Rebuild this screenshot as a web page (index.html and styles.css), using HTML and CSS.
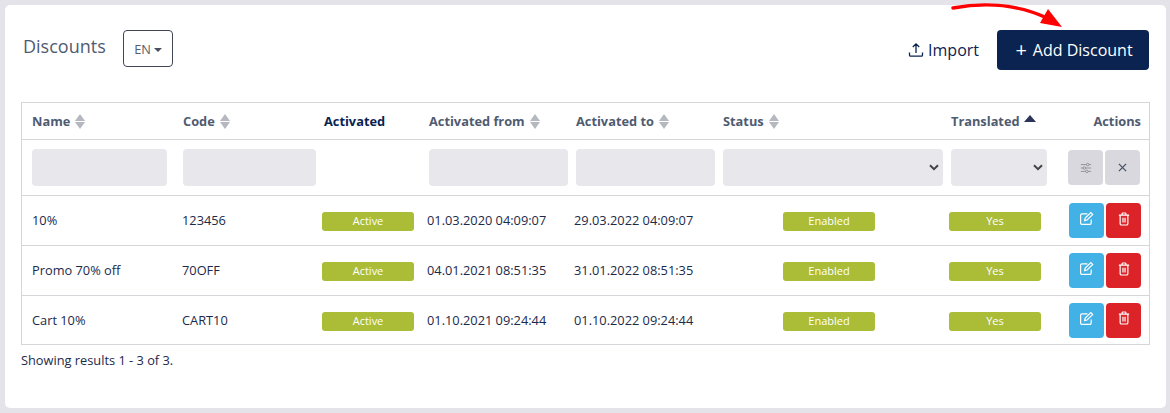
FILE: index.html
```html
<!DOCTYPE html>
<html lang="en">
<head>
<meta charset="utf-8">
<title>Discounts</title>
<link rel="stylesheet" href="styles.css">
</head>
<body>
<main class="card">
  <svg class="arrow" width="120" height="32" viewBox="0 0 120 32" aria-hidden="true">
    <path d="M3 8C30 3 65 3 97 18" fill="none" stroke="#f00" stroke-width="3.500" stroke-linecap="round"/>
    <path d="M98 9L112 27L90 23Z" fill="#f00"/>
  </svg>
  <header class="top">
    <div class="top-left">
      <h1 class="title">Discounts</h1>
      <button class="lang">EN<span class="caret"></span></button>
    </div>
    <div class="top-right">
      <a class="import">
        <svg width="16" height="16" viewBox="0 0 16 16" fill="none" stroke="#0a2351" stroke-width="1.300"><path d="M8 11V2M4.800 5L8 1.800 11.200 5M1.500 10.500V13a1.200 1.200 0 0 0 1.200 1.200h10.600a1.200 1.200 0 0 0 1.200-1.200V10.500"/></svg>
        Import
      </a>
      <button class="add"><span class="plus">+</span>Add Discount</button>
    </div>
  </header>

  <section class="table">
    <div class="row head">
      <div class="th muted">Name<span class="sort"></span></div>
      <div class="th muted">Code<span class="sort"></span></div>
      <div class="th dark">Activated</div>
      <div class="th muted">Activated from<span class="sort"></span></div>
      <div class="th muted">Activated to<span class="sort"></span></div>
      <div class="th muted">Status<span class="sort"></span></div>
      <div class="th muted">Translated<span class="sort-up"></span></div>
      <div class="th muted right">Actions</div>
    </div>
    <div class="row head filters">
      <input class="field" aria-label="Name">
      <input class="field" aria-label="Code">
      <div></div>
      <input class="field" aria-label="Activated from">
      <input class="field" aria-label="Activated to">
      <div class="select"><svg class="chev" width="10" height="7" viewBox="0 0 10 7"><path d="M1 1.200L5 5.200 9 1.200" fill="none" stroke="#444" stroke-width="2"/></svg></div>
      <div class="select narrow"><svg class="chev" width="10" height="7" viewBox="0 0 10 7"><path d="M1 1.200L5 5.200 9 1.200" fill="none" stroke="#444" stroke-width="2"/></svg></div>
      <div class="filter-btns">
        <button class="btn grey"><svg width="12" height="12" viewBox="0 0 14 14" fill="none" stroke="#8b8b93"><path d="M1 3h12M1 7h12M1 11h12"/><circle cx="9" cy="3" r="1.500" fill="#d8d8de"/><circle cx="5" cy="7" r="1.500" fill="#d8d8de"/><circle cx="8" cy="11" r="1.500" fill="#d8d8de"/></svg></button>
        <button class="btn grey"><svg width="9" height="9" viewBox="0 0 10 10" fill="none" stroke="#4a4f60" stroke-width="1.400"><path d="M1 1l8 8M9 1l-8 8"/></svg></button>
      </div>
    </div>

    <div class="row body">
      <div>10%</div><div>123456</div><span class="badge">Active</span>
      <div>01.03.2020 04:09:07</div><div>29.03.2022 04:09:07</div>
      <span class="badge status">Enabled</span><span class="badge">Yes</span>
      <div class="actions">
        <button class="btn blue"><svg class="ico" width="15" height="15" viewBox="0 0 16 16" fill="none" stroke="#fff" stroke-width="1.300"><path d="M13 9v3.800a1.500 1.500 0 0 1-1.500 1.500H3.200a1.500 1.500 0 0 1-1.500-1.500V4.500A1.500 1.500 0 0 1 3.200 3H9"/><path d="M6 10.300l.6-2.700 6-6 2 2-6 6z"/></svg></button>
        <button class="btn red"><svg class="ico" width="12" height="14" viewBox="0 0 14 16" fill="none" stroke="#fff" stroke-width="1.400"><path d="M1 3.500h12M4.800 3.500V2a1 1 0 0 1 1-1h2.400a1 1 0 0 1 1 1v1.500M2.500 3.500v10a1.500 1.500 0 0 0 1.500 1.500h6a1.500 1.500 0 0 0 1.500-1.500v-10M5.800 6.500v5.500M8.200 6.500v5.500"/></svg></button>
      </div>
    </div>
    <div class="row body">
      <div>Promo 70% off</div><div>70OFF</div><span class="badge">Active</span>
      <div>04.01.2021 08:51:35</div><div>31.01.2022 08:51:35</div>
      <span class="badge status">Enabled</span><span class="badge">Yes</span>
      <div class="actions">
        <button class="btn blue"><svg class="ico" width="15" height="15" viewBox="0 0 16 16" fill="none" stroke="#fff" stroke-width="1.300"><path d="M13 9v3.800a1.500 1.500 0 0 1-1.500 1.500H3.200a1.500 1.500 0 0 1-1.500-1.500V4.500A1.500 1.500 0 0 1 3.200 3H9"/><path d="M6 10.300l.6-2.700 6-6 2 2-6 6z"/></svg></button>
        <button class="btn red"><svg class="ico" width="12" height="14" viewBox="0 0 14 16" fill="none" stroke="#fff" stroke-width="1.400"><path d="M1 3.500h12M4.800 3.500V2a1 1 0 0 1 1-1h2.400a1 1 0 0 1 1 1v1.500M2.500 3.500v10a1.500 1.500 0 0 0 1.500 1.500h6a1.500 1.500 0 0 0 1.500-1.500v-10M5.800 6.500v5.500M8.200 6.500v5.500"/></svg></button>
      </div>
    </div>
    <div class="row body last">
      <div>Cart 10%</div><div>CART10</div><span class="badge">Active</span>
      <div>01.10.2021 09:24:44</div><div>01.10.2022 09:24:44</div>
      <span class="badge status">Enabled</span><span class="badge">Yes</span>
      <div class="actions">
        <button class="btn blue"><svg class="ico" width="15" height="15" viewBox="0 0 16 16" fill="none" stroke="#fff" stroke-width="1.300"><path d="M13 9v3.800a1.500 1.500 0 0 1-1.500 1.500H3.200a1.500 1.500 0 0 1-1.500-1.500V4.500A1.500 1.500 0 0 1 3.200 3H9"/><path d="M6 10.300l.6-2.700 6-6 2 2-6 6z"/></svg></button>
        <button class="btn red"><svg class="ico" width="12" height="14" viewBox="0 0 14 16" fill="none" stroke="#fff" stroke-width="1.400"><path d="M1 3.500h12M4.800 3.500V2a1 1 0 0 1 1-1h2.400a1 1 0 0 1 1 1v1.500M2.500 3.500v10a1.500 1.500 0 0 0 1.500 1.500h6a1.500 1.500 0 0 0 1.500-1.500v-10M5.800 6.500v5.500M8.200 6.500v5.500"/></svg></button>
      </div>
    </div>
  </section>
  <p class="results">Showing results 1 - 3 of 3.</p>
</main>
</body>
</html>
```
FILE: styles.css
```css
* { box-sizing: border-box; }
html, body { height: 100%; }
body {
  margin: 0;
  padding: 5px 4px 5px 5px;
  background: #e3e3e9;
  font-family: "Open Sans", sans-serif;
  color: #1c2a4a;
  overflow: hidden;
}
.card {
  position: relative;
  height: 403px;
  background: #fff;
  border-radius: 5px;
  padding: 25px 16px 0;
}
.arrow { position: absolute; left: 945px; top: -5px; }
.top { display: flex; justify-content: space-between; height: 72px; }
.top-left { display: flex; align-items: flex-start; }
.title {
  margin: 2px 0 0 2px;
  font-size: 18px;
  line-height: 28px;
  font-weight: 400;
  color: #4f5b70;
  width: 100px;
}
.lang {
  width: 50px;
  height: 37px;
  background: #fff;
  border: 1px solid #3f4658;
  border-radius: 4px;
  font: 400 12.8px "Open Sans", sans-serif;
  color: #555d6e;
  padding: 0;
}
.caret {
  display: inline-block;
  margin-left: 3px;
  vertical-align: 2px;
  border: 4px solid transparent;
  border-top-color: #4a4f60;
  border-bottom: 0;
}
.top-right { display: flex; align-items: flex-start; padding-right: 1px; }
.import {
  display: flex;
  align-items: center;
  gap: 4px;
  height: 40px;
  margin-right: 18px;
  padding-bottom: 1px;
  font-size: 16px;
  color: #0a2351;
}
.add {
  width: 152px;
  height: 40px;
  background: #0a2351;
  border: 0;
  border-radius: 4px;
  color: #fff;
  font: 400 16px "Open Sans", sans-serif;
  padding: 0 0 1px 2px;
}
.plus { margin-right: 6px; font-size: 20px; line-height: 20px; vertical-align: -1px; }
.table { width: 1129px; border: 1px solid #d6d6da; }
.row {
  display: grid;
  padding-left: 10px;
  align-items: center;
  border-bottom: 1px solid #d6d6da;
}
.head { grid-template-columns: 151px 141px 105px 147px 147px 228px 96px 1fr; height: 37px; }
.th { font-size: 12.8px; font-weight: 700; display: flex; align-items: center; }
.muted { color: #4f5b70; }
.dark { color: #0a2351; }
.right { justify-content: flex-end; padding-right: 8px; }
.sort {
  display: flex;
  flex-direction: column;
  gap: 1px;
  margin-left: 5px;
}
.sort::before {
  content: "";
  border: 5px solid transparent;
  border-bottom: 7px solid #b5b8bf;
  border-top: 0;
}
.sort::after {
  content: "";
  border: 5px solid transparent;
  border-top: 7px solid #b5b8bf;
  border-bottom: 0;
}
.sort-up {
  margin: -5px 0 0 4px;
  border: 6px solid transparent;
  border-bottom: 7px solid #2c3559;
  border-top: 0;
}
.filters { height: 56px; }
.field, .select {
  height: 37px;
  background: #e7e7ec;
  border: 0;
  border-radius: 4px;
  margin: 0;
}
.filters .field:nth-child(1) { width: 135px; }
.filters .field:nth-child(2) { width: 133px; }
.filters .field:nth-child(4), .filters .field:nth-child(5) { width: 139px; }
.select { width: 220px; display: flex; align-items: center; justify-content: flex-end; padding-right: 4px; }
.select.narrow { width: 96px; }
.filter-btns { display: flex; gap: 2px; justify-content: flex-end; padding-right: 9px; }
.btn {
  width: 35px;
  height: 35px;
  border: 0;
  border-radius: 4px;
  padding: 0;
  display: flex;
  align-items: center;
  justify-content: center;
}
.grey { background: #d8d8de; }
.blue { background: #41b1e6; }
.red { background: #dc2328; }
.ico { margin-bottom: 4px; }
.body { height: 50px; font-size: 12.8px; color: #1c2a4a; grid-template-columns: 150px 140px 105px 147px 147px 228px 92px 1fr; }
.body > div:not(.actions) { padding-bottom: 2px; }
.last { border-bottom: 0; height: 48px; }
.last > div:not(.actions) { padding-bottom: 0; }
.badge {
  display: block;
  width: 92px;
  height: 19px;
  margin-top: 2px;
  background: #abbc37;
  color: #fff;
  border-radius: 3px;
  font-size: 11px;
  line-height: 18px;
  text-align: center;
}
.status { margin-left: 62px; }
.actions { display: flex; gap: 2px; justify-content: flex-end; padding-right: 8px; }
.results { margin: 6px 0 0; font-size: 12.8px; line-height: 18px; }
```
